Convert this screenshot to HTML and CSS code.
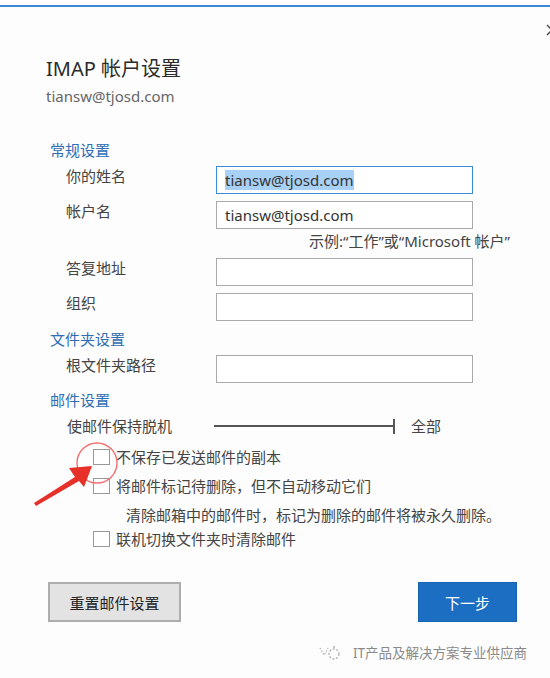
FILE: index.html
```html
<!DOCTYPE html>
<html lang="zh-CN">
<head>
    <meta charset="UTF-8">
    <meta name="viewport" content="width=device-width, initial-scale=1.0">
    <title>IMAP 帐户设置</title>
    <link rel="stylesheet" href="styles.css">
</head>
<body>

<div class="window">
    <div class="top-line"></div>
    <svg class="close-btn" width="12" height="12" viewBox="0 0 12 12">
        <path d="M1 1 L11 11 M11 1 L1 11" stroke="#444" stroke-width="1.3"/>
    </svg>

    <div class="dialog">
        <h1>IMAP 帐户设置</h1>
        <div class="account">tiansw@tjosd.com</div>

        <div class="section section-general">
            <h2>常规设置</h2>
            <div class="field-row first">
                <label>你的姓名</label>
                <div class="field focus"><span class="sel">tiansw@tjosd.com</span></div>
            </div>
            <div class="field-row">
                <label>帐户名</label>
                <div class="field">tiansw@tjosd.com</div>
            </div>
            <div class="hint">示例:“工作”或“Microsoft 帐户”</div>
            <div class="field-row">
                <label>答复地址</label>
                <div class="field"></div>
            </div>
            <div class="field-row">
                <label>组织</label>
                <div class="field"></div>
            </div>
        </div>

        <div class="section section-folder">
            <h2>文件夹设置</h2>
            <div class="field-row first">
                <label>根文件夹路径</label>
                <div class="field"></div>
            </div>
        </div>

        <div class="section section-mail">
            <h2>邮件设置</h2>
            <div class="slider-row">
                <label>使邮件保持脱机</label>
                <div class="slider">
                    <div class="track"></div>
                    <div class="tick"></div>
                    <span class="slider-value">全部</span>
                </div>
            </div>
            <div class="check-row first">
                <span class="box"></span>
                <span>不保存已发送邮件的副本</span>
            </div>
            <div class="check-row">
                <span class="box"></span>
                <span>将邮件标记待删除，但不自动移动它们</span>
            </div>
            <div class="check-note">清除邮箱中的邮件时，标记为删除的邮件将被永久删除。</div>
            <div class="check-row last">
                <span class="box"></span>
                <span>联机切换文件夹时清除邮件</span>
            </div>
        </div>

        <div class="actions">
            <button class="btn btn-reset">重置邮件设置</button>
            <button class="btn btn-next">下一步</button>
        </div>
    </div>

    <div class="watermark">
        <svg class="wm-icon" width="24" height="18" viewBox="0 0 24 18">
            <path d="M1 4 L5 11 L9 4" fill="none" stroke="#b5b5b5" stroke-width="1.2" stroke-dasharray="1.6 1.4"/>
            <circle cx="15" cy="10" r="5" fill="none" stroke="#b0b0b0" stroke-width="1.3" stroke-dasharray="2 1.6"/>
            <circle cx="15" cy="3" r="1" fill="#b5b5b5"/>
        </svg>
        <span>IT产品及解决方案专业供应商</span>
    </div>

    <!-- 标注：红圈和箭头 -->
    <svg class="mark" width="100" height="80" viewBox="0 0 100 80">
        <circle cx="67" cy="28" r="20" fill="none" stroke="#f07070" stroke-width="1.4"/>
        <polygon points="62,31 54,52 49,46 6,71 4,68 45,42 39,33" fill="#e8302a"/>
    </svg>
</div>

</body>
</html>
```

FILE: styles.css
```css
* {
    box-sizing: border-box;
}
body {
    margin: 0;
    background-color: #fff;
    font-family: "Noto Sans", "Noto Sans CJK SC", sans-serif;
    color: #444;
    overflow: hidden;
}
.window {
    position: relative;
    width: 550px;
    height: 678px;
    background-color: #fdfdfd;
}
.top-line {
    margin-top: 5px;
    height: 2px;
    background-color: #3b89d4;
}
.close-btn {
    position: absolute;
    top: 19px;
    right: -8px;
}
.dialog {
    padding: 49px 33px 0 46px;
}
h1 {
    margin: 0;
    font-size: 20px;
    line-height: 26px;
    font-weight: normal;
    color: #2b2b2b;
}
.account {
    margin-top: 4px;
    font-size: 15px;
    line-height: 20px;
    color: #666;
}
.section {
    padding-left: 4px;
    font-size: 15px;
}
.section h2 {
    margin: 0;
    font-size: 15px;
    line-height: 20px;
    font-weight: normal;
    color: #2f6db4;
}
.section-general {
    margin-top: 34px;
}
.section-folder {
    margin-top: 8px;
}
.section-mail {
    margin-top: 7px;
}
.field-row {
    display: grid;
    grid-template-columns: 150px 257px;
    align-items: start;
    padding-left: 16px;
    margin-top: 7px;
}
.field-row.first {
    margin-top: 6px;
}
.field-row label {
    line-height: 20px;
    color: #444;
}
.field {
    height: 28px;
    border: 1px solid #a9a9a9;
    background-color: #fff;
    padding: 0 8px;
    font-size: 15px;
    line-height: 26px;
    color: #333;
}
.field.focus {
    border-color: #3a8ad6;
}
.sel {
    background-color: #a9d0f5;
}
.hint {
    margin: 2px 7px 0 0;
    text-align: right;
    line-height: 20px;
    color: #444;
}
.slider-row {
    display: grid;
    grid-template-columns: 147px 1fr;
    align-items: center;
    padding-left: 17px;
    margin-top: 6px;
    line-height: 20px;
}
.slider {
    display: flex;
    align-items: center;
}
.track {
    width: 179px;
    height: 2px;
    background-color: #555;
}
.tick {
    width: 2px;
    height: 15px;
    background-color: #555;
}
.slider-value {
    margin-left: 16px;
}
.check-row {
    display: flex;
    align-items: center;
    gap: 6px;
    padding-left: 43px;
    margin-top: 9px;
    line-height: 20px;
}
.check-row.first {
    margin-top: 11px;
}
.check-row.last {
    margin-top: 4px;
}
.box {
    width: 17px;
    height: 16px;
    border: 1px solid #999;
    background-color: #fff;
}
.check-note {
    padding-left: 76px;
    margin-top: 9px;
    line-height: 20px;
}
.actions {
    display: flex;
    justify-content: space-between;
    margin: 33px 0 0 2px;
}
.btn {
    height: 40px;
    font-family: inherit;
    font-size: 15px;
    cursor: pointer;
}
.btn-reset {
    width: 133px;
    background-color: #e3e3e3;
    border: 2px solid #adadad;
    color: #222;
}
.btn-next {
    width: 99px;
    background-color: #1b6ec2;
    border: 1px solid #1864b2;
    color: #fff;
}
.watermark {
    display: flex;
    justify-content: flex-end;
    align-items: center;
    gap: 10px;
    padding-right: 23px;
    margin-top: 21px;
    font-size: 13.5px;
    line-height: 20px;
    color: #8a8a8a;
}
.mark {
    position: absolute;
    left: 30px;
    top: 430px;
}
```
